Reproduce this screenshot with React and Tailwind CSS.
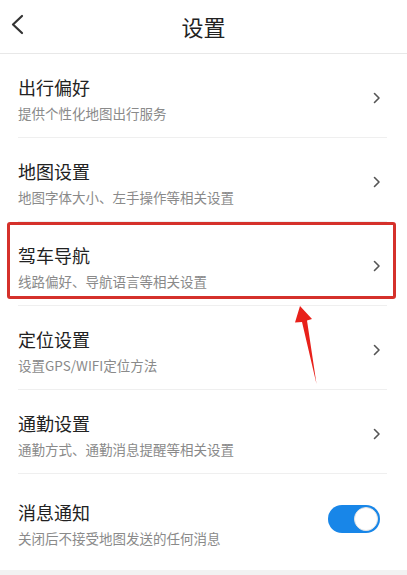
import React from 'react';

const items = [
  { title: '出行偏好', desc: '提供个性化地图出行服务' },
  { title: '地图设置', desc: '地图字体大小、左手操作等相关设置' },
  { title: '驾车导航', desc: '线路偏好、导航语言等相关设置', marked: true },
  { title: '定位设置', desc: '设置GPS/WIFI定位方法' },
  { title: '通勤设置', desc: '通勤方式、通勤消息提醒等相关设置' },
];

function Chevron() {
  return (
    <svg width="8" height="12" viewBox="0 0 8 12" className="mt-[4px] shrink-0">
      <path d="M1.5 1.5 L6 6 L1.5 10.5" fill="none" stroke="#555" strokeWidth="1.6" strokeLinecap="round" strokeLinejoin="round" />
    </svg>
  );
}

function Row({ title, desc, marked }) {
  return (
    <div className="relative">
      <div className="ml-[18px] mr-[20px] h-[84px] border-b border-[#efefef] flex items-center justify-between">
        <div className="self-start pt-[21px]">
          <div className="text-[18px] leading-[24px] text-[#222]">{title}</div>
          <div className="mt-[5px] text-[13.5px] leading-[18px] text-[#8a8a8a]">{desc}</div>
        </div>
        <div className="mr-[6px]">
          <Chevron />
        </div>
      </div>
      {marked && (
        <div className="absolute left-[7px] right-[11px] top-0 h-[77px] border-[3px] border-[#d5312b] rounded-[3px]" />
      )}
    </div>
  );
}

export default function App() {
  const [notify, setNotify] = React.useState(true);

  return (
    <div className="relative w-[407px] h-[575px] overflow-hidden bg-white" style={{ fontFamily: '"Noto Sans CJK SC", "Noto Sans", sans-serif' }}>
      <header className="relative h-[54px] border-b border-[#e8e8e8] flex items-center justify-center">
        <svg width="16" height="22" viewBox="0 0 16 22" className="absolute left-[9px] top-[14px]">
          <path d="M13 2 L4 10.5 L13 19" fill="none" stroke="#333" strokeWidth="2.2" strokeLinecap="round" strokeLinejoin="round" />
        </svg>
        <h1 className="text-[22px] leading-[28px] text-[#222] -mt-[1px]">设置</h1>
      </header>

      <main>
        {items.map((it) => (
          <Row key={it.title} {...it} />
        ))}

        <div className="ml-[18px] mr-[20px] h-[96px] flex items-start justify-between">
          <div className="pt-[26px]">
            <div className="text-[18px] leading-[24px] text-[#222]">消息通知</div>
            <div className="mt-[5px] text-[13.5px] leading-[18px] text-[#8a8a8a]">关闭后不接受地图发送的任何消息</div>
          </div>
          <button
            onClick={() => setNotify(!notify)}
            className={`mt-[31px] mr-[7px] w-[52px] h-[28px] rounded-full p-[2px] flex items-center ${notify ? 'bg-[#1886e8] justify-end' : 'bg-[#ddd] justify-start'}`}
          >
            <span className="block w-[24px] h-[24px] rounded-full bg-white border border-[#e4e4e4]" />
          </button>
        </div>

        <div className="h-[10px] bg-[#f2f2f2]" />
      </main>

      <svg width="407" height="575" viewBox="0 0 407 575" className="absolute left-0 top-0 pointer-events-none">
        <polygon points="300,306 312,319 307,320.5 316.5,384 302,322 295,322.5" fill="#e8211b" />
      </svg>
    </div>
  );
}
